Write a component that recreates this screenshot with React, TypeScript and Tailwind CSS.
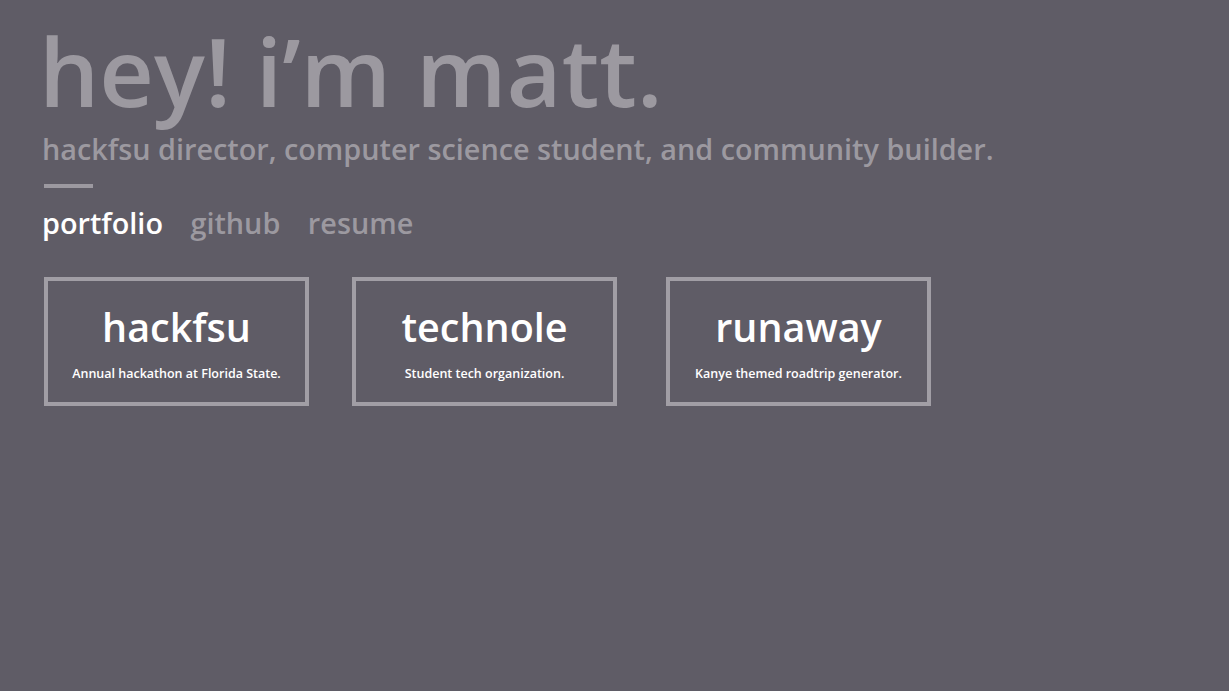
const projects = [
  { name: 'hackfsu', blurb: 'Annual hackathon at Florida State.', gap: 'ml-0' },
  { name: 'technole', blurb: 'Student tech organization.', gap: 'ml-[43px]' },
  { name: 'runaway', blurb: 'Kanye themed roadtrip generator.', gap: 'ml-[49px]' },
];

const ProjectCard = ({ name, blurb, gap }: { name: string; blurb: string; gap: string }) => (
  <a
    href="#"
    className={`${gap} flex h-[129px] w-[265px] flex-col items-center border-4 border-[#a19ea5] pt-[21px] text-white`}
  >
    <span className="text-[39.5px] leading-[50px] font-semibold">{name}</span>
    <span className="mt-[13px] text-[12.5px] font-semibold">{blurb}</span>
  </a>
);

export default function App() {
  return (
    <div
      className="min-h-[691px] w-full bg-[#5f5c66] px-[44px] pt-[11px]"
      style={{ fontFamily: '"Open Sans", sans-serif' }}
    >
      <h1 className="-ml-[5px] text-[95px] leading-[118px] font-semibold text-[#9c99a0]">
        hey! i’m matt.
      </h1>
      <p className="-ml-[2px] text-[28.8px] leading-[40px] font-semibold text-[#9c99a0]">
        hackfsu director, computer science student, and community builder.
      </p>
      <div className="mt-[15px] h-[4px] w-[49px] bg-[#9c99a0]" />
      <nav className="-ml-[2px] mt-[15px] flex gap-[27.5px] text-[28.8px] leading-[40px] font-semibold">
        <a href="#" className="text-white">portfolio</a>
        <a href="#" className="text-[#9c99a0]">github</a>
        <a href="#" className="text-[#9c99a0]">resume</a>
      </nav>
      <div className="mt-[34px] flex">
        {projects.map((p) => (
          <ProjectCard key={p.name} {...p} />
        ))}
      </div>
    </div>
  );
}
